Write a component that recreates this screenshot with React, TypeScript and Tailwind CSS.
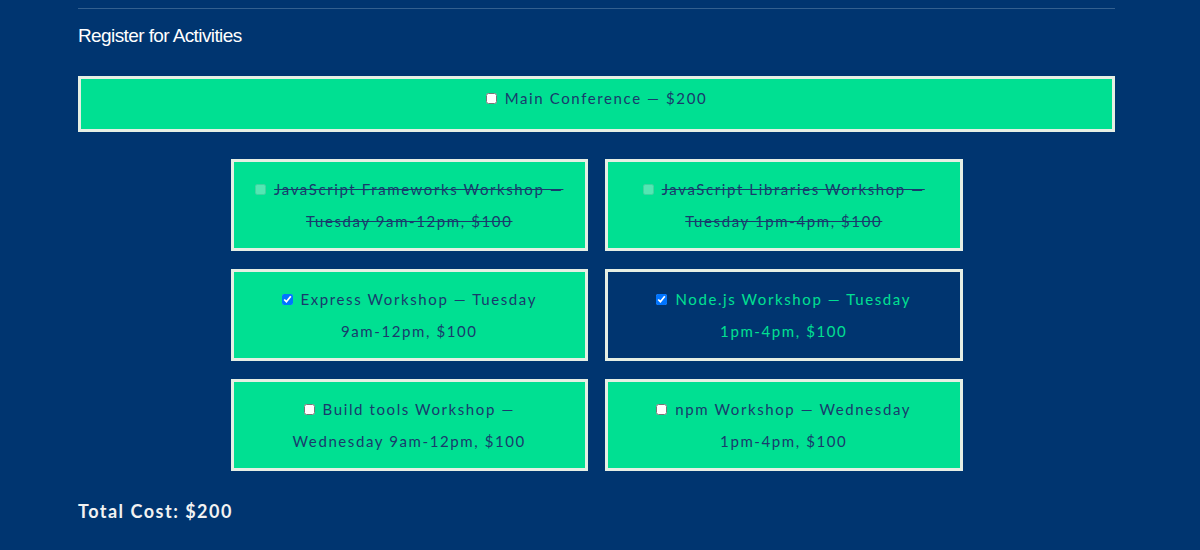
import React from "react";

interface Activity {
  label: string;
  line2: string;
  checked?: boolean;
  disabled?: boolean;
  dark?: boolean;
}

const activities: Activity[] = [
  { label: "JavaScript Frameworks Workshop —", line2: "Tuesday 9am-12pm, $100", disabled: true },
  { label: "JavaScript Libraries Workshop —", line2: "Tuesday 1pm-4pm, $100", disabled: true },
  { label: "Express Workshop — Tuesday", line2: "9am-12pm, $100", checked: true },
  { label: "Node.js Workshop — Tuesday", line2: "1pm-4pm, $100", checked: true, dark: true },
  { label: "Build tools Workshop —", line2: "Wednesday 9am-12pm, $100" },
  { label: "npm Workshop — Wednesday", line2: "1pm-4pm, $100" },
];

const Box: React.FC<{ a: Activity }> = ({ a }) => {
  return (
    <label
      className={`flex flex-col items-center justify-center h-[92px] border-[3px] border-[#e6efe4] text-[15px] leading-[32px] tracking-[1.6px] ${
        a.dark ? "bg-[#003570] text-[#00e092]" : "bg-[#00e092] text-[#1a3a6c]"
      } ${a.disabled ? "line-through" : ""}`}
    >
      <span className="flex items-center">
        <input
          type="checkbox"
          defaultChecked={a.checked}
          disabled={a.disabled}
          className={`w-[11px] h-[11px] mr-[8px] ${a.disabled ? "opacity-50" : ""}`}
        />
        {a.label}
      </span>
      <span>{a.line2}</span>
    </label>
  );
};

export default function App() {
  return (
    <div className="w-[1200px] h-[550px] bg-[#003570] font-['Lato',sans-serif] overflow-hidden">
      <div className="px-[78px] pt-[8px]">
        <div className="h-px bg-[#33608f] w-[1037px]" />
        <h2 className="font-['Liberation_Sans',Arial,sans-serif] text-white text-[19px] tracking-[-0.6px] mt-[15px] leading-[24px]">
          Register for Activities
        </h2>
        <label className="mt-[28px] flex items-start justify-center h-[56px] w-[1037px] pt-[3px] border-[3px] border-[#e6efe4] bg-[#00e092] text-[#1a3a6c] text-[15px] leading-[32px] tracking-[1.6px]">
          <span className="flex items-center">
            <input type="checkbox" className="w-[11px] h-[11px] mr-[8px]" />
            Main Conference — $200
          </span>
        </label>
        <div className="w-[1037px] flex justify-center mt-[27px]">
          <div className="grid grid-cols-2 w-[732px] gap-x-[17px] gap-y-[18px]">
            {activities.map((a) => (
              <Box key={a.label} a={a} />
            ))}
          </div>
        </div>
        <p className="mt-[27px] text-[#f2f2f2] font-bold text-[18px] tracking-[1.5px]">Total Cost: $200</p>
      </div>
    </div>
  );
}
